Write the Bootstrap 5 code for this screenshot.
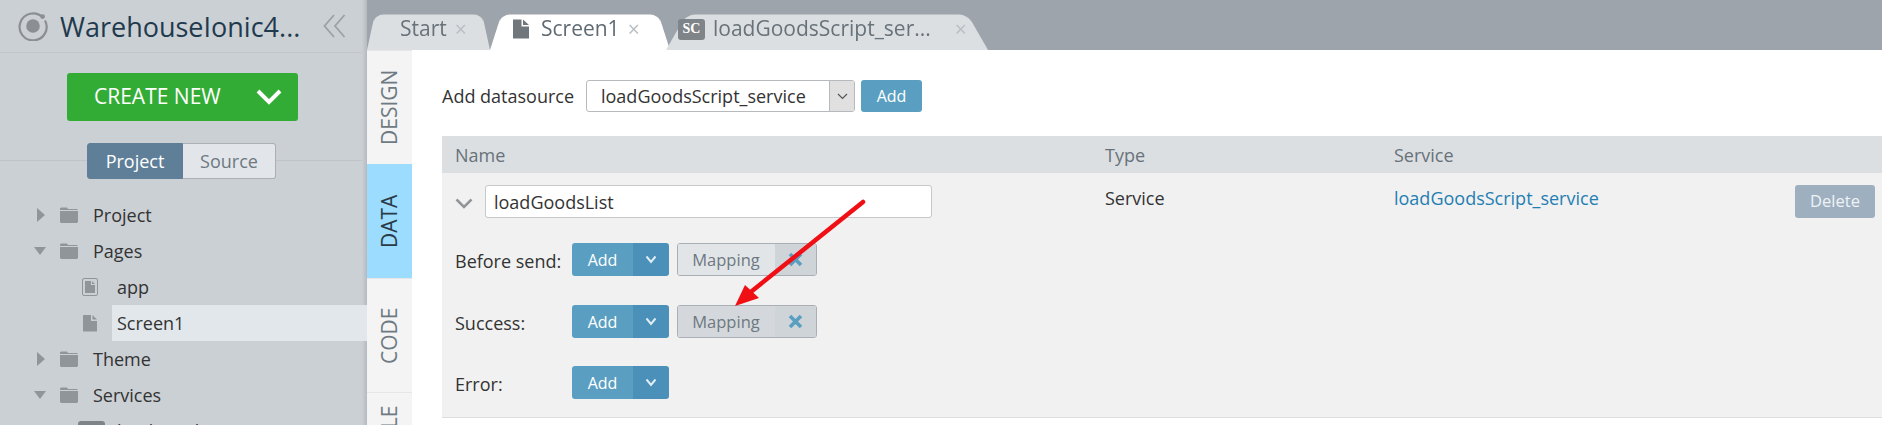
<!DOCTYPE html>
<html lang="en">
<head>
<meta charset="utf-8">
<title>WarehouseIonic4</title>
<link rel="stylesheet" href="https://cdn.jsdelivr.net/npm/bootstrap@5.3.0/dist/css/bootstrap.min.css">
<style>
html,body{height:425px;overflow:hidden;}
body{font-family:"Open Sans",sans-serif;font-size:18px;color:#333;background:#fff;}
.stage{width:1882px;height:425px;overflow:hidden;position:relative;}
.side{width:367px;flex:none;background:#cbd0d4;height:425px;position:relative;overflow:hidden;}
.side::after{content:"";position:absolute;top:0;right:0;bottom:0;width:5px;background:linear-gradient(90deg,#cbd0d4,#b5babf);}
.side-head{height:53px;border-bottom:1px solid #c2c7cb;padding-left:18px;padding-right:21px;}
.app-title{font-size:27px;line-height:1;color:#1f3a4e;margin-left:12px;white-space:nowrap;}
.create-wrap{padding-top:20px;padding-left:67px;}
.btn.create{width:231px;height:48px;background:#33ac35;border:0;border-radius:3px;color:#fff;font-size:21px;padding:0 16px 0 27px;}
.tog-wrap{margin-top:22px;height:36px;position:relative;padding-left:87px;}
.tog-wrap::before{content:"";position:absolute;left:0;right:5px;top:17px;height:1px;background:#bfc4c8;}
.btn.tog{height:36px;font-size:18px;padding:0;border-radius:3px;position:relative;}
.tog-on{width:96px;background:#5f7f98;border:1px solid #5f7f98;color:#fff;}
.tog-off{width:93px;background:#e2e6ea;border:1px solid #aab0b5;color:#6d7881;}
.btn.tog-on:hover{background:#5f7f98;color:#fff;}
.tree{margin-top:18px;}
.tree-row{height:36px;color:#333;font-size:18px;white-space:nowrap;}
.caret-box{width:60px;padding-left:32px;flex:none;}
.tri-r{width:0;height:0;border-left:8px solid #8f9599;border-top:7px solid transparent;border-bottom:7px solid transparent;margin-left:5px;}
.tri-d{width:0;height:0;border-top:8px solid #8f9599;border-left:6px solid transparent;border-right:6px solid transparent;margin-left:2px;}
.fold{width:18px;height:16px;flex:none;margin-right:15px;}
.kid{padding-left:82px;}
.kid-ic{width:16px;height:18px;flex:none;margin-right:19px;}
.kid-sel{flex:1;background:#e2e7eb;height:36px;padding-left:5px;margin-left:-5px;display:flex;align-items:center;position:relative;z-index:1;}
.svc-kid{padding-left:78px;}
.svc-txt{margin-left:12px;}
.sc{background:#7f8488;color:#fff;border-radius:3px;font-family:"Liberation Serif",serif;font-weight:700;font-size:14px;line-height:1;display:inline-flex;align-items:center;justify-content:center;width:27px;height:21px;flex:none;}
.main{flex:1;min-width:0;height:425px;background:#fff;}
.tabbar{height:50px;background:#9da4ac;padding-top:8px;padding-left:0;}
.tabx{height:42px;position:relative;font-size:21px;color:#68727a;white-space:nowrap;}
.tabx::before{content:"";position:absolute;inset:0;background:#dcdfe2;border-radius:10px 10px 0 0;transform:perspective(70px) rotateX(14deg);transform-origin:bottom;}
.tabx>*{position:relative;}
.tabx.on::before{background:#fff;}
.tabx.on{color:#5f6a72;}
.t1{width:123px;padding-left:33px;}
.t2{width:180px;padding-left:23px;}
.t3{width:322px;padding-left:12px;margin-left:-4px;}
.xx{color:#b9bec2;font-size:21px;line-height:1;}
.gap-s{margin-right:12px;}
.work{height:375px;overflow:hidden;}
.vtabs{width:45px;flex:none;background:#f4f4f4;}
.vtab{height:114px;flex:none;font-size:21px;color:#6f7a82;border-bottom:1px solid #e4e6e8;writing-mode:vertical-rl;transform:rotate(180deg);line-height:1;}
.vtab.on{background:#9bdcff;color:#2a3b48;border-color:#9bdcff;}
.pane{flex:1;min-width:0;padding-top:30px;padding-left:30px;}
.ds-row{height:32px;margin-bottom:24px;}
.ds-lab{width:144px;flex:none;}
.form-select.pick{width:269px;height:32px;font-size:18px;padding:0 30px 0 14px;border-color:#b6babd;border-radius:3px;color:#333;font-family:"Open Sans",sans-serif;background-image:none;background-color:#fff;flex:none;}
.pick-wrap{position:relative;width:269px;flex:none;}
.pick-arrow{position:absolute;right:1px;top:1px;bottom:1px;width:25px;background:#e0e0e0;border-left:1px solid #b6babd;border-radius:0 2px 2px 0;display:flex;align-items:center;justify-content:center;}
.btn.addb{background:#5a9fc2;border:0;color:#fff;font-size:16px;height:32px;width:61px;padding:0;border-radius:3px;margin-left:6px;}
.grid-tbl{border-bottom:1px solid #dcdfe2;}
.gh{height:37px;background:#dcdfe2;color:#68727a;}
.gh>span{padding-top:1px;}
.gb{height:244px;background:#f1f1f1;position:relative;}
.c1{width:663px;padding-left:13px;flex:none;}
.c2{width:289px;flex:none;}
.c3{flex:1;}
.delb{width:80px;height:33px;background:#9eb0c0;border:0;color:#eef3f6;font-size:16.5px;padding:0;border-radius:3px;margin-right:7px;flex:none;}
.btn.delb:hover{background:#9eb0c0;color:#eef3f6;}
.nm-row{height:33px;margin-top:12px;margin-bottom:25px;}
.nm-chev{width:30px;flex:none;}
.form-control.nm{width:447px;height:33px;font-size:18px;padding:1px 8px 0;border-color:#c6c9cc;border-radius:3px;color:#333;}
.ev-row{height:33px;margin-bottom:29px;}
.ev-lab{width:117px;flex:none;padding-top:3px;}
.split{display:flex;height:33px;width:97px;border-radius:3px;overflow:hidden;flex:none;}
.sp-a{width:61px;background:#5a9fc2;color:#fff;font-size:16px;display:flex;align-items:center;justify-content:center;padding-top:1px;}
.sp-b{flex:1;background:#4a90b8;display:flex;align-items:center;justify-content:center;}
.chip{display:flex;height:33px;width:140px;border:1px solid #a9afb4;border-radius:3px;margin-left:8px;overflow:hidden;color:#6d7881;font-size:16.5px;flex:none;}
.chip-a{width:97px;background:#e2e5e8;display:flex;align-items:center;justify-content:center;padding:1px 1px 0 0;}
.chip-b{flex:1;background:#cfd4d8;display:flex;align-items:center;justify-content:center;}
.chip.hov .chip-a{background:#d4d8dc;}
.ev-row.r2{margin-bottom:28px;}
.svc-link{color:#1f7fb2;text-decoration:none;}
.arrow{position:absolute;left:0;top:0;width:1882px;height:425px;pointer-events:none;}
</style>
</head>
<body>
<div class="stage d-flex">
  <aside class="side">
    <div class="side-head d-flex align-items-center">
      <svg width="30" height="30" viewBox="0 0 30 30" class="flex-shrink-0"><path d="M24.5 6.2A13.5 13.5 0 1 0 27 9.5" fill="none" stroke="#8b8f93" stroke-width="2.2"/><circle cx="15" cy="15" r="6.8" fill="#8b8f93"/><circle cx="24.6" cy="5.6" r="2.4" fill="#8b8f93"/></svg>
      <span class="app-title flex-grow-1">WarehouseIonic4...</span>
      <svg width="23" height="24" viewBox="0 0 23 24"><path d="M11 1 1.5 12 11 23M21.5 1 12 12l9.500 11" fill="none" stroke="#9ba1a6" stroke-width="1.800"/></svg>
    </div>
    <div class="create-wrap">
      <button class="btn create d-flex align-items-center justify-content-between" type="button"><span>CREATE NEW</span>
        <svg width="26" height="18" viewBox="0 0 26 18"><path d="M2 3l11 11L24 3" fill="none" stroke="#fff" stroke-width="4"/></svg></button>
    </div>
    <div class="tog-wrap d-flex">
      <button class="btn tog tog-on rounded-end-0" type="button">Project</button>
      <button class="btn tog tog-off rounded-start-0 border-start-0" type="button">Source</button>
    </div>
    <div class="tree">
      <div class="tree-row d-flex align-items-center"><span class="caret-box"><span class="tri-r d-block"></span></span>
        <svg class="fold" viewBox="0 0 18 16"><path d="M0 3V1.500L1 .5h6l1 1.500h9L18 3zM0 4h18v11l-1 1H1l-1-1z" fill="#8f9599"/></svg><span>Project</span></div>
      <div class="tree-row d-flex align-items-center"><span class="caret-box"><span class="tri-d d-block"></span></span>
        <svg class="fold" viewBox="0 0 18 16"><path d="M0 3V1.500L1 .5h6l1 1.500h9L18 3zM0 4h18v11l-1 1H1l-1-1z" fill="#8f9599"/></svg><span>Pages</span></div>
      <div class="tree-row kid d-flex align-items-center">
        <svg class="kid-ic" viewBox="0 0 16 18"><rect x=".5" y=".5" width="15" height="17" rx="1.500" fill="none" stroke="#8f9599"/><path d="M3 3h6v4h4v8H3zM10 3l3 3h-3z" fill="#8f9599"/></svg><span>app</span></div>
      <div class="tree-row kid d-flex align-items-center">
        <svg class="kid-ic" viewBox="0 0 16 18"><path d="M1 1h8v6h6v10.500H1zM10.500 1 15 5.500h-4.500z" fill="#8f9599"/></svg><span class="kid-sel">Screen1</span></div>
      <div class="tree-row d-flex align-items-center"><span class="caret-box"><span class="tri-r d-block"></span></span>
        <svg class="fold" viewBox="0 0 18 16"><path d="M0 3V1.500L1 .5h6l1 1.500h9L18 3zM0 4h18v11l-1 1H1l-1-1z" fill="#8f9599"/></svg><span>Theme</span></div>
      <div class="tree-row d-flex align-items-center"><span class="caret-box"><span class="tri-d d-block"></span></span>
        <svg class="fold" viewBox="0 0 18 16"><path d="M0 3V1.500L1 .5h6l1 1.500h9L18 3zM0 4h18v11l-1 1H1l-1-1z" fill="#8f9599"/></svg><span>Services</span></div>
      <div class="tree-row svc-kid d-flex align-items-center"><span class="sc">SC</span><span class="svc-txt">loadGoodsScript_service</span></div>
    </div>
  </aside>
  <main class="main">
    <div class="tabbar d-flex">
      <div class="tabx t1 d-flex align-items-center"><span>Start</span><span class="xx ms-2">×</span></div>
      <div class="tabx t2 on d-flex align-items-center">
        <svg width="16" height="20" viewBox="0 0 16 20" class="gap-s"><path d="M0 .5h8.500v7H16v12H0zM10 .5l6 5.500h-6z" fill="#6f767c"/></svg>
        <span>Screen1</span><span class="xx ms-2">×</span></div>
      <div class="tabx t3 d-flex align-items-center"><span class="sc me-2">SC</span><span>loadGoodsScript_ser...</span><span class="xx ms-4">×</span></div>
    </div>
    <div class="work d-flex">
      <div class="vtabs d-flex flex-column">
        <div class="vtab d-flex align-items-center justify-content-center">DESIGN</div>
        <div class="vtab on d-flex align-items-center justify-content-center">DATA</div>
        <div class="vtab d-flex align-items-center justify-content-center">CODE</div>
        <div class="vtab d-flex align-items-center justify-content-center">MODULE</div>
      </div>
      <div class="pane">
        <div class="ds-row d-flex align-items-center">
          <span class="ds-lab">Add datasource</span>
          <div class="pick-wrap">
            <select class="form-select pick"><option>loadGoodsScript_service</option></select>
            <span class="pick-arrow"><svg width="11" height="7" viewBox="0 0 11 7"><path d="M1 1l4.500 4.500L10 1" fill="none" stroke="#555" stroke-width="1.200"/></svg></span>
          </div>
          <button class="btn addb" type="button">Add</button>
        </div>
        <div class="grid-tbl">
          <div class="gh d-flex align-items-center"><span class="c1">Name</span><span class="c2">Type</span><span class="c3">Service</span></div>
          <div class="gb d-flex">
            <div class="c1">
              <div class="nm-row d-flex align-items-center">
                <span class="nm-chev"><svg width="18" height="11" viewBox="0 0 18 11"><path d="M1.500 1.500 9 9l7.500-7.500" fill="none" stroke="#8f9599" stroke-width="2.500"/></svg></span>
                <input class="form-control nm" type="text" value="loadGoodsList">
              </div>
              <div class="ev-row d-flex align-items-center"><span class="ev-lab">Before send:</span>
                <div class="split"><span class="sp-a">Add</span><span class="sp-b"><svg width="12" height="9" viewBox="0 0 12 9"><path d="M1.500 1.500 6 7l4.500-5.500" fill="none" stroke="#dfeef6" stroke-width="2"/></svg></span></div>
                <div class="chip"><span class="chip-a">Mapping</span><span class="chip-b"><svg width="15" height="15" viewBox="0 0 15 15"><path d="M2 2l11 11M13 2 2 13" stroke="#5a9fc2" stroke-width="3.600"/></svg></span></div>
              </div>
              <div class="ev-row r2 d-flex align-items-center"><span class="ev-lab">Success:</span>
                <div class="split"><span class="sp-a">Add</span><span class="sp-b"><svg width="12" height="9" viewBox="0 0 12 9"><path d="M1.500 1.500 6 7l4.500-5.500" fill="none" stroke="#dfeef6" stroke-width="2"/></svg></span></div>
                <div class="chip hov"><span class="chip-a">Mapping</span><span class="chip-b"><svg width="15" height="15" viewBox="0 0 15 15"><path d="M2 2l11 11M13 2 2 13" stroke="#5a9fc2" stroke-width="3.600"/></svg></span></div>
              </div>
              <div class="ev-row mb-0 d-flex align-items-center"><span class="ev-lab">Error:</span>
                <div class="split"><span class="sp-a">Add</span><span class="sp-b"><svg width="12" height="9" viewBox="0 0 12 9"><path d="M1.500 1.500 6 7l4.500-5.500" fill="none" stroke="#dfeef6" stroke-width="2"/></svg></span></div>
              </div>
            </div>
            <div class="c2 pt-2"><span class="d-block mt-1">Service</span></div>
            <div class="c3 d-flex justify-content-between align-items-start pt-2">
              <a class="svc-link d-block mt-1" href="#">loadGoodsScript_service</a>
              <button class="btn delb mt-1" type="button">Delete</button>
            </div>
          </div>
        </div>
      </div>
    </div>
  </main>
  <svg class="arrow" viewBox="0 0 1882 425"><path d="M863 202 752 291" stroke="#f00f14" stroke-width="4.500" stroke-linecap="round" fill="none"/><path d="M735 306 745 285 759 298z" fill="#f00f14"/></svg>
</div>
<script src="https://cdn.jsdelivr.net/npm/bootstrap@5.3.0/dist/js/bootstrap.bundle.min.js"></script>
</body>
</html>
